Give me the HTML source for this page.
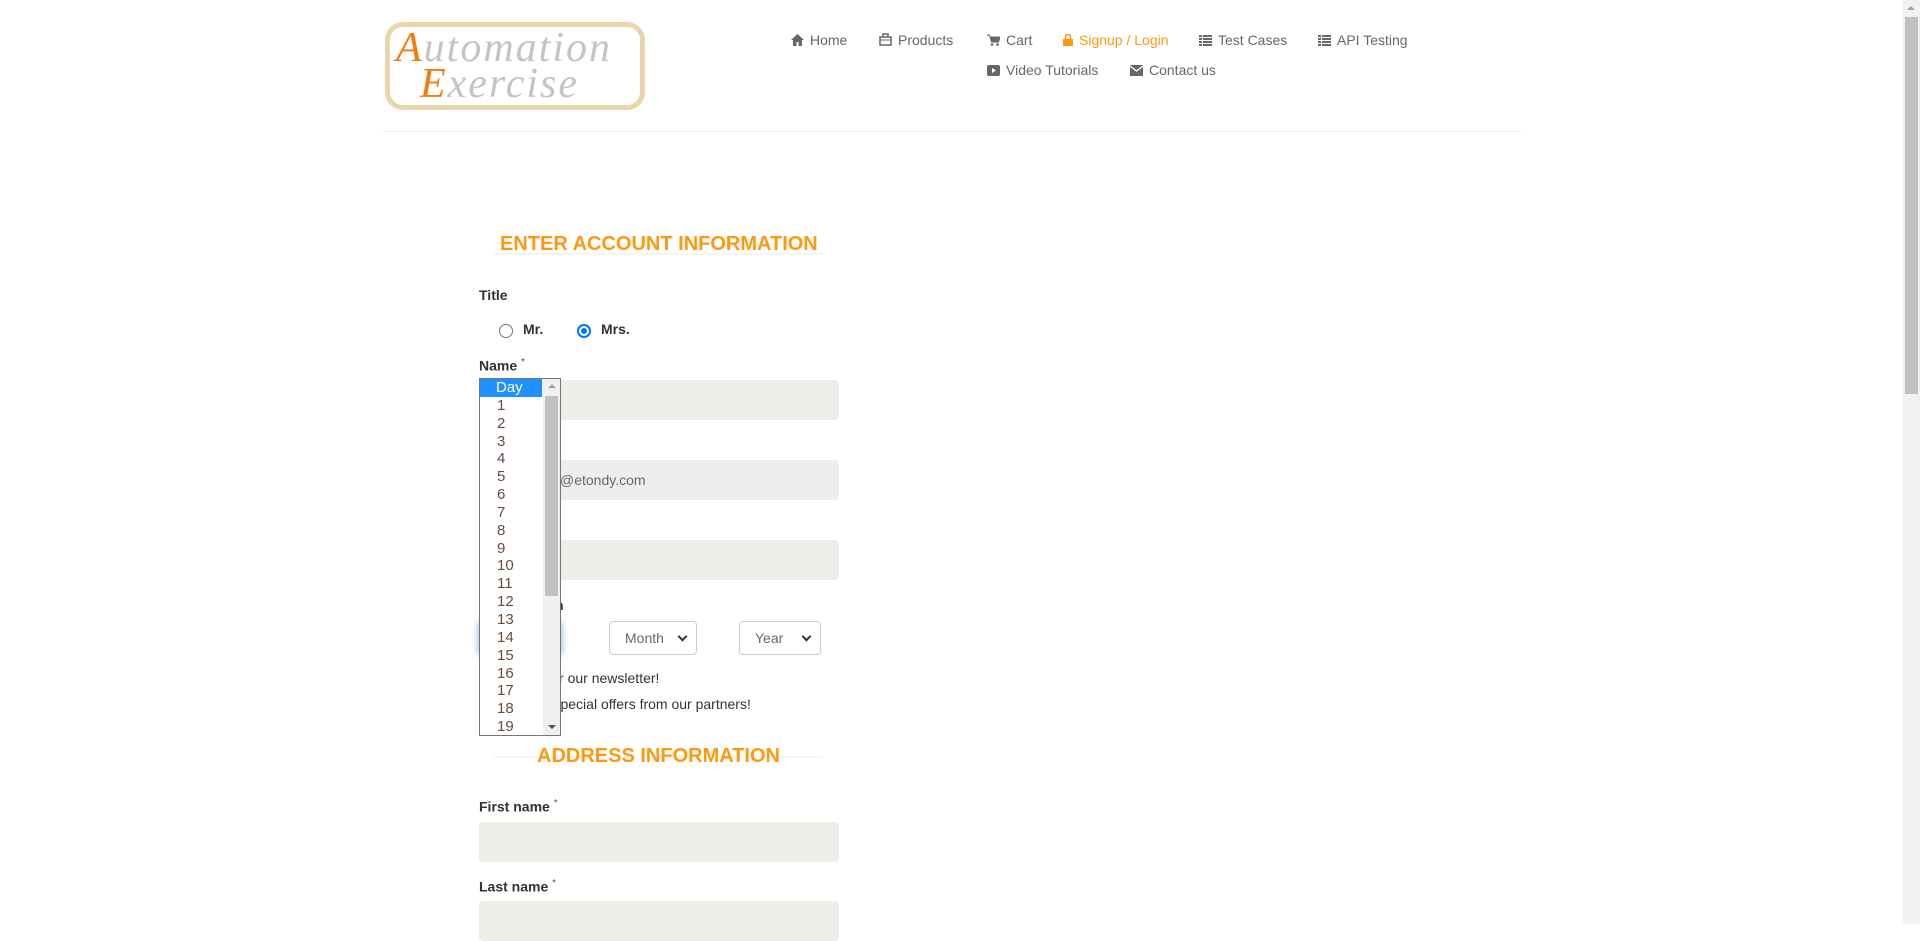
<!DOCTYPE html>
<html><head><meta charset="utf-8"><style>
*{box-sizing:border-box;margin:0;padding:0}
body{width:1920px;height:924px;overflow:hidden;background:#fff;font-family:"Liberation Sans",Arial,sans-serif;position:relative;color:#333}
.a{position:absolute;white-space:nowrap}
.nav{font-size:14px;color:#696763}
.nav svg{vertical-align:-1px;margin-right:6px}
.lbl{font-size:14px;font-weight:bold;color:#333}
.lbl sup{font-weight:normal;font-size:10px;color:#555}
.inp{position:absolute;left:479px;width:360px;height:40px;background:#eeeee8;border-radius:4px}
.h{font-size:20px;font-weight:bold;color:#fe980f}
.sel{position:absolute;height:34px;border:1px solid #ccc;border-radius:4px;background:#fff;font-size:14px;color:#696763;padding:8px 0 0 15px}
.sel:after{content:"";position:absolute;right:10px;top:11px;width:5px;height:5px;border-right:2px solid #333;border-bottom:2px solid #333;transform:rotate(45deg)}
.dd{position:absolute;left:479px;top:378px;width:82px;height:358px;border:1px solid #767676;background:#fff;font-size:15px;color:#6b4a3c}
.dd .it{height:17.85px;line-height:18px;padding-left:17px}
</style></head><body>
<div class="a" style="left:385px;top:22px;width:260px;height:88px;border:5px solid #e8d5a8;border-radius:18px;"></div>
<div class="a" style="left:396px;top:24px;font-family:'Liberation Serif',serif;font-style:italic;font-size:42px;color:#c4c4c4;letter-spacing:2px"><span style="color:#f47c0e">A</span>utomation</div>
<div class="a" style="left:420px;top:60px;font-family:'Liberation Serif',serif;font-style:italic;font-size:42px;color:#c4c4c4;letter-spacing:2px"><span style="color:#f47c0e">E</span>xercise</div>

<div class="a nav" style="left:791px;top:32px"><svg width="13" height="12" viewBox="0 0 13 12"><path d="M6.5 0L0 6h2v6h3.5V8h2v4H11V6h2z" fill="#696763"/></svg>Home</div>
<div class="a nav" style="left:879px;top:32px"><svg width="13" height="13" viewBox="0 0 13 13"><path d="M1 4h11v8H1zM4 4V1h5v3" fill="none" stroke="#696763" stroke-width="1.5"/><path d="M1 7h11" stroke="#696763"/></svg>Products</div>
<div class="a nav" style="left:987px;top:32px"><svg width="13" height="12" viewBox="0 0 13 12"><path d="M0 1h2.5l2 7h7l1.5-5H4" fill="#696763" stroke="#696763"/><circle cx="5" cy="10.5" r="1.3" fill="#696763"/><circle cx="10.5" cy="10.5" r="1.3" fill="#696763"/></svg>Cart</div>
<div class="a nav" style="left:1063px;top:32px;color:#fe980f"><svg width="10" height="12" viewBox="0 0 10 12"><rect x="0" y="5" width="10" height="7" fill="#fe980f"/><path d="M2.5 5V3a2.5 2.5 0 015 0v2" fill="none" stroke="#fe980f" stroke-width="1.6"/></svg>Signup / Login</div>
<div class="a nav" style="left:1199px;top:32px"><svg width="13" height="11" viewBox="0 0 13 11"><path d="M0 0h3v2H0zM4 0h9v2H4zM0 3h3v2H0zM4 3h9v2H4zM0 6h3v2H0zM4 6h9v2H4zM0 9h3v2H0zM4 9h9v2H4z" fill="#696763"/></svg>Test Cases</div>
<div class="a nav" style="left:1318px;top:32px"><svg width="13" height="11" viewBox="0 0 13 11"><path d="M0 0h3v2H0zM4 0h9v2H4zM0 3h3v2H0zM4 3h9v2H4zM0 6h3v2H0zM4 6h9v2H4zM0 9h3v2H0zM4 9h9v2H4z" fill="#696763"/></svg>API Testing</div>
<div class="a nav" style="left:987px;top:62px"><svg width="13" height="11" viewBox="0 0 13 11"><rect width="13" height="11" rx="2" fill="#696763"/><path d="M5 3l4 2.5L5 8z" fill="#fff"/></svg>Video Tutorials</div>
<div class="a nav" style="left:1130px;top:62px"><svg width="13" height="11" viewBox="0 0 13 11"><rect width="13" height="11" fill="#696763"/><path d="M0 1l6.5 5L13 1" fill="none" stroke="#fff" stroke-width="1.3"/></svg>Contact us</div>

<div class="a" style="left:383px;top:131px;width:1139px;height:1px;background:#f0f0ee"></div>

<div class="a" style="left:493px;top:253px;width:330px;height:2px;background:#f5f5f3"></div>
<div class="a h" style="left:500px;top:233px">ENTER ACCOUNT INFORMATION</div>
<div class="a lbl" style="left:479px;top:287px">Title</div>
<div class="a" style="left:499px;top:324px;width:14px;height:14px;border:1px solid #767676;border-radius:50%"></div>
<div class="a lbl" style="left:523px;top:321px">Mr.</div>
<div class="a" style="left:577px;top:324px;width:14px;height:14px;border:2px solid #0075ff;border-radius:50%;padding:2px"><div style="width:6px;height:6px;background:#0075ff;border-radius:50%"></div></div>
<div class="a lbl" style="left:601px;top:321px">Mrs.</div>
<div class="a lbl" style="left:479px;top:357px">Name <sup>*</sup></div>
<div class="inp" style="top:380px"></div>
<div class="inp" style="top:460px;background:#eee"></div>
<div class="a" style="left:560px;top:472px;font-size:14px;color:#696763">@etondy.com</div>
<div class="inp" style="top:540px"></div>
<div class="a lbl" style="left:555px;top:597px">h</div>
<div class="sel" style="left:479px;top:621px;width:82px;box-shadow:0 0 8px #66afe9"></div>
<div class="sel" style="left:609px;top:621px;width:88px">Month</div>
<div class="sel" style="left:739px;top:621px;width:82px">Year</div>
<div class="a" style="left:496px;top:670px;font-size:14px;color:#333">Sign up for our newsletter!</div>
<div class="a" style="left:499px;top:696px;font-size:14px;color:#333">Receive special offers from our partners!</div>

<div class="dd">
<div class="it" style="background:#1e90ff;color:#fff;width:62px;padding-left:16px">Day</div>
<div class="it">1</div><div class="it">2</div><div class="it">3</div><div class="it">4</div><div class="it">5</div><div class="it">6</div><div class="it">7</div><div class="it">8</div><div class="it">9</div><div class="it">10</div><div class="it">11</div><div class="it">12</div><div class="it">13</div><div class="it">14</div><div class="it">15</div><div class="it">16</div><div class="it">17</div><div class="it">18</div><div class="it">19</div>
<div class="a" style="left:63px;top:0;width:17px;height:356px;background:#f0f0f0"></div>
<div class="a" style="left:65px;top:17px;width:13px;height:200px;background:#c1c1c1"></div>
<div class="a" style="left:68px;top:5px;width:0;height:0;border-left:4px solid transparent;border-right:4px solid transparent;border-bottom:4px solid #a3a3a3"></div>
<div class="a" style="left:68px;top:346px;width:0;height:0;border-left:4px solid transparent;border-right:4px solid transparent;border-top:4px solid #505050"></div>
</div>

<div class="a" style="left:493px;top:756px;width:330px;height:2px;background:#f5f5f3"></div>
<div class="a" style="left:537px;top:745px;background:#fff"><span class="h">ADDRESS INFORMATION</span></div>
<div class="a lbl" style="left:479px;top:798px">First name <sup>*</sup></div>
<div class="inp" style="top:822px"></div>
<div class="a lbl" style="left:479px;top:878px">Last name <sup>*</sup></div>
<div class="inp" style="top:901px;height:40px"></div>

<div class="a" style="left:1903px;top:0;width:17px;height:924px;background:#f1f1f1"></div>
<div class="a" style="left:1905px;top:17px;width:13px;height:377px;background:#c1c1c1"></div>
<div class="a" style="left:1907px;top:6px;width:0;height:0;border-left:4px solid transparent;border-right:4px solid transparent;border-bottom:4px solid #a3a3a3"></div>
</body></html>
